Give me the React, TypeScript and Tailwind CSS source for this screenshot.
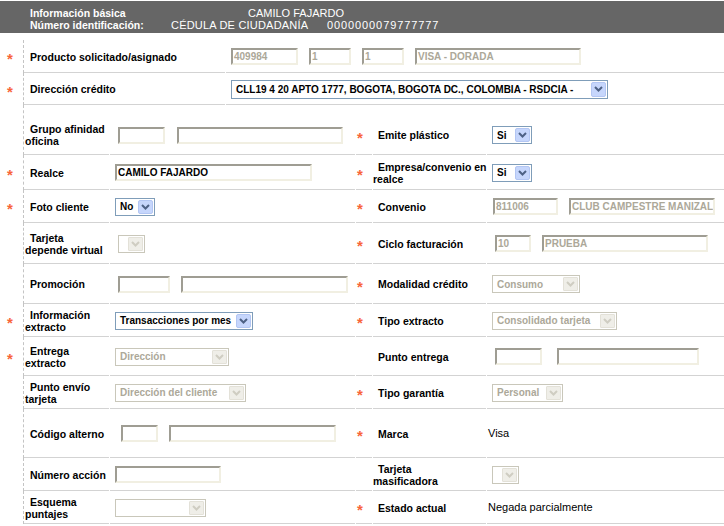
import React from 'react';

// celdas del formulario
const line = 'shadow-[inset_0_-1px_0_#d3d3d3]';

function Ast() {
  return <span className="mt-[4px] text-[15px] font-bold leading-none text-[#f8653a]">*</span>;
}

function Chevron({ color }: { color: string }) {
  return (
    <svg width="9" height="6" viewBox="0 0 9 6">
      <polyline points="1,1 4.5,4.5 8,1" fill="none" stroke={color} strokeWidth="2" />
    </svg>
  );
}

function Input({ className, text = '', disabled = false }: { className: string; text?: string; disabled?: boolean }) {
  return (
    <div
      className={`h-[17px] shrink-0 overflow-hidden whitespace-nowrap border-2 border-t-[#9f9d93] border-l-[#9f9d93] border-b-[#f1efe2] border-r-[#f1efe2] bg-white px-px text-[10px] font-bold leading-[13px] ${disabled ? 'text-[#aca899]' : 'text-black'} ${className}`}
    >
      {text}
    </div>
  );
}

function Select({ className, text = '', disabled = false, tall = false }: { className: string; text?: string; disabled?: boolean; tall?: boolean }) {
  return (
    <div
      className={`flex shrink-0 items-stretch border bg-white p-px ${tall ? 'h-[19px]' : 'h-[18px]'} ${disabled ? 'border-[#c9c7ba] text-[#aca899]' : 'border-[#7f9db9] text-black'} ${className}`}
    >
      <span className="flex flex-1 items-center overflow-hidden whitespace-nowrap pl-[3px] text-[10px] font-bold">{text}</span>
      {disabled ? (
        <span className="flex w-[15px] items-center justify-center rounded-[1px] border border-[#e3e1d8] bg-[#efeee8]">
          <Chevron color="#cfcdc2" />
        </span>
      ) : (
        <span className="flex w-[15px] items-center justify-center rounded-[2px] border border-[#b3c6f3] bg-[#c6d6fc]">
          <Chevron color="#4d6185" />
        </span>
      )}
    </div>
  );
}

function Label({ children }: { children: React.ReactNode }) {
  return <div className="whitespace-nowrap indent-[5px] text-[10.5px] font-bold leading-[12px] text-black">{children}</div>;
}

type RowProps = {
  h: string;
  pad?: string;
  ast?: boolean;
  label: React.ReactNode;
  field: React.ReactNode;
  astR?: boolean;
  labelR: React.ReactNode;
  fieldR: React.ReactNode;
};

function Row({ h, pad = '', ast, label, field, astR, labelR, fieldR }: RowProps) {
  return (
    <div className={`grid grid-cols-[22px_86px_245px_16px_113px_1fr] gap-x-px ${h}`}>
      <div className={`flex items-center pl-[7px] ${pad}`}>{ast && <Ast />}</div>
      <div className={`flex items-center border-l border-dashed border-[#c4c4c4] pl-px ${line} ${pad}`}>{label}</div>
      <div className={`flex items-center ${line} ${pad}`}>{field}</div>
      <div className={`flex items-center pl-px ${line} ${pad}`}>{astR && <Ast />}</div>
      <div className={`flex items-center ${line} ${pad}`}>{labelR}</div>
      <div className={`flex items-center ${line} ${pad}`}>{fieldR}</div>
    </div>
  );
}

export default function App() {
  return (
    <div className="h-[526px] w-[724px] overflow-hidden bg-white font-['Liberation_Sans',Arial,sans-serif]">
      {/* Cabecera */}
      <div className="mt-px h-[32px] bg-[#666666] pl-[30px] pt-[6px] leading-[12px] text-white">
        <div className="flex">
          <span className="w-[218px] text-[10.5px] font-bold">Información básica</span>
          <span className="text-[11px]">CAMILO FAJARDO</span>
        </div>
        <div className="flex">
          <span className="w-[141px] text-[10.5px] font-bold">Número identificación:</span>
          <span className="w-[156px] text-[11px] tracking-[0.2px]">CÉDULA DE CIUDADANÍA</span>
          <span className="text-[11px] tracking-[0.9px]">0000000079777777</span>
        </div>
      </div>

      <div className="mt-[7px]">
        {/* Producto */}
        <div className="grid h-[33px] grid-cols-[22px_202px_1fr] gap-x-px">
          <div className="flex items-center pl-[7px]"><Ast /></div>
          <div className={`flex items-center border-l border-dashed border-[#c4c4c4] pl-px ${line}`}>
            <Label>Producto solicitado/asignado</Label>
          </div>
          <div className={`flex items-center gap-[11px] pl-[5px] ${line}`}>
            <Input className="w-[67px]" text="409984" disabled />
            <Input className="w-[42px]" text="1" disabled />
            <Input className="w-[42px]" text="1" disabled />
            <Input className="w-[166px]" text="VISA - DORADA" disabled />
          </div>
        </div>
        <div className="grid h-[32px] grid-cols-[22px_202px_1fr] gap-x-px">
          <div className="flex items-center pl-[7px]"><Ast /></div>
          <div className={`flex items-center border-l border-dashed border-[#c4c4c4] pl-px ${line}`}>
            <Label>Dirección crédito</Label>
          </div>
          <div className={`flex items-center pl-[5px] ${line}`}>
            <Select className="w-[377px]" tall text="CLL19 4 20 APTO 1777, BOGOTA, BOGOTA DC., COLOMBIA - RSDCIA -" />
          </div>
        </div>

        <Row
          h="h-[50px]"
          pad="pt-[10px]"
          label={<Label>Grupo afinidad<br />oficina</Label>}
          field={<div className="flex gap-[12px] pl-[8px]"><Input className="w-[47px]" /><Input className="w-[166px]" /></div>}
          astR
          labelR={<Label>Emite plástico</Label>}
          fieldR={<div className="pl-[5px]"><Select className="w-[40px]" text="Si" /></div>}
        />
        <Row
          h="h-[35px]"
          ast
          label={<Label>Realce</Label>}
          field={<div className="pl-[5px]"><Input className="w-[197px]" text="CAMILO FAJARDO" /></div>}
          astR
          labelR={<Label>Empresa/convenio en<br />realce</Label>}
          fieldR={<div className="pl-[5px]"><Select className="w-[40px]" text="Si" /></div>}
        />
        <Row
          h="h-[33px]"
          ast
          label={<Label>Foto cliente</Label>}
          field={<div className="pl-[5px]"><Select className="w-[40px]" text="No" /></div>}
          astR
          labelR={<Label>Convenio</Label>}
          fieldR={
            <div className="flex gap-[11px] pl-[6px]">
              <Input className="w-[65px]" text="811006" disabled />
              <Input className="w-[146px]" text="CLUB CAMPESTRE MANIZALI" disabled />
            </div>
          }
        />
        <Row
          h="h-[41px]"
          label={<Label>Tarjeta<br />depende virtual</Label>}
          field={<div className="pl-[8px]"><Select className="w-[27px]" disabled /></div>}
          astR
          labelR={<Label>Ciclo facturación</Label>}
          fieldR={
            <div className="flex gap-[11px] pl-[8px]">
              <Input className="w-[36px]" text="10" disabled />
              <Input className="w-[166px]" text="PRUEBA" disabled />
            </div>
          }
        />
        <Row
          h="h-[40px]"
          label={<Label>Promoción</Label>}
          field={<div className="flex gap-[11px] pl-[8px]"><Input className="w-[52px]" /><Input className="w-[167px]" /></div>}
          astR
          labelR={<Label>Modalidad crédito</Label>}
          fieldR={<div className="pl-[5px]"><Select className="w-[88px]" text="Consumo" disabled /></div>}
        />
        <Row
          h="h-[33px]"
          ast
          label={<Label>Información<br />extracto</Label>}
          field={<div className="pl-[5px]"><Select className="w-[138px]" text="Transacciones por mes" /></div>}
          astR
          labelR={<Label>Tipo extracto</Label>}
          fieldR={<div className="pl-[5px]"><Select className="w-[125px]" text="Consolidado tarjeta" disabled /></div>}
        />
        <Row
          h="h-[39px]"
          ast
          label={<Label>Entrega<br />extracto</Label>}
          field={<div className="pl-[5px]"><Select className="w-[114px]" text="Dirección" disabled /></div>}
          labelR={<Label>Punto entrega</Label>}
          fieldR={<div className="flex gap-[15px] pl-[8px]"><Input className="w-[47px]" /><Input className="w-[142px]" /></div>}
        />
        <Row
          h="h-[33px]"
          label={<Label>Punto envío<br />tarjeta</Label>}
          field={<div className="pl-[5px]"><Select className="w-[131px]" text="Dirección del cliente" disabled /></div>}
          astR
          labelR={<Label>Tipo garantía</Label>}
          fieldR={<div className="pl-[5px]"><Select className="w-[71px]" text="Personal" disabled /></div>}
        />
        <Row
          h="h-[49px]"
          label={<Label>Código alterno</Label>}
          field={<div className="flex gap-[11px] pl-[11px]"><Input className="w-[37px]" /><Input className="w-[167px]" /></div>}
          astR
          labelR={<Label>Marca</Label>}
          fieldR={<span className="pl-px text-[11px] text-black">Visa</span>}
        />
        <Row
          h="h-[33px]"
          label={<Label>Número acción</Label>}
          field={<div className="pl-[5px]"><Input className="w-[106px]" /></div>}
          labelR={<Label>Tarjeta<br />masificadora</Label>}
          fieldR={<div className="pl-[5px]"><Select className="w-[27px]" disabled /></div>}
        />
        <Row
          h="h-[33px]"
          label={<Label>Esquema<br />puntajes</Label>}
          field={<div className="pl-[5px]"><Select className="w-[91px]" disabled /></div>}
          astR
          labelR={<Label>Estado actual</Label>}
          fieldR={<span className="pl-px text-[11px] text-black">Negada parcialmente</span>}
        />
      </div>
    </div>
  );
}
